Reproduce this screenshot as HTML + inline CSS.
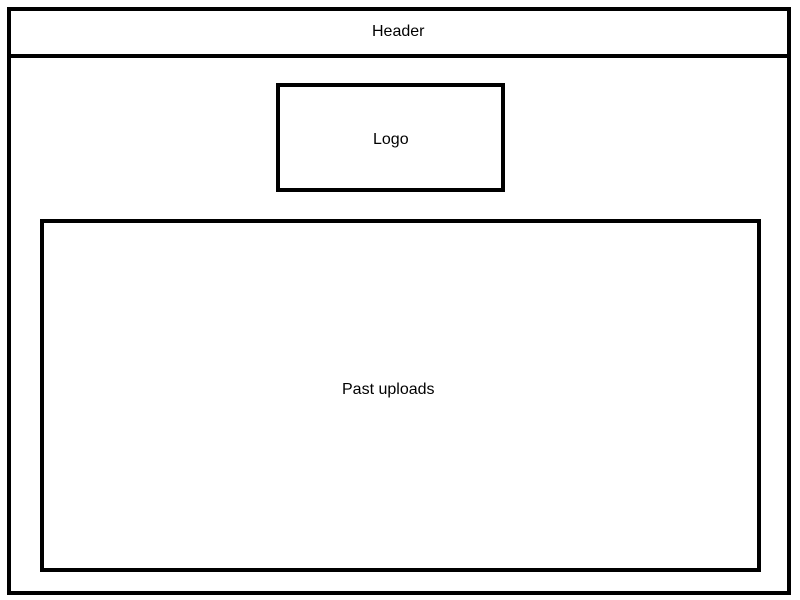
<!DOCTYPE html>
<html><head><style>
html,body{margin:0;padding:0;width:800px;height:600px;background:#fff;overflow:hidden}
div{position:absolute;box-sizing:border-box}
span{position:absolute;font-family:"Liberation Sans",Arial,sans-serif;font-size:16px;color:#000;line-height:18px;white-space:nowrap}
</style></head><body>
<div style="left:7px;top:7px;width:784px;height:588px;border:4px solid #000"></div>
<div style="left:7px;top:54px;width:784px;height:4px;background:#000"></div>
<div style="left:276px;top:83px;width:229px;height:109px;border:4px solid #000"></div>
<div style="left:40px;top:219px;width:721px;height:353px;border:4px solid #000"></div>
<span style="left:372px;top:23px">Header</span>
<span style="left:373px;top:131px">Logo</span>
<span style="left:342px;top:381px">Past uploads</span>
</body></html>
